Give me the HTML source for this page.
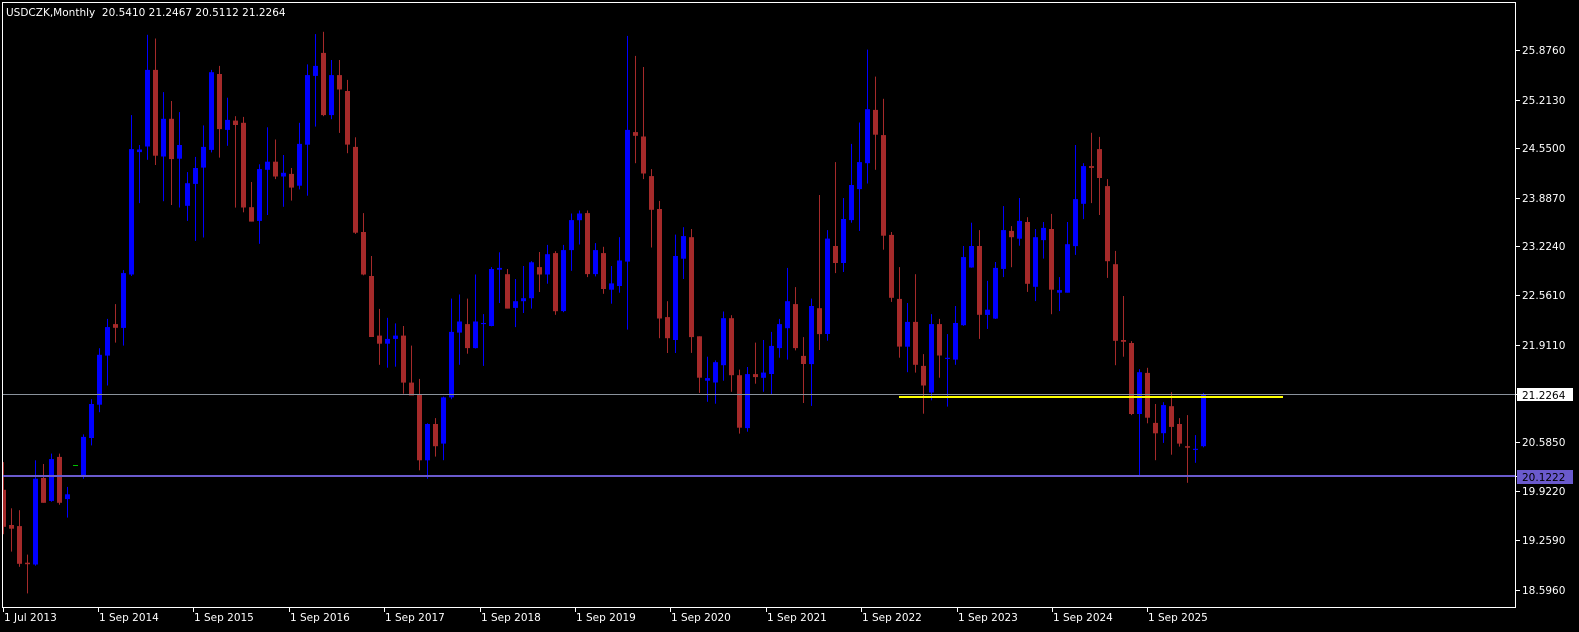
<!DOCTYPE html>
<html><head><meta charset="utf-8">
<style>
html,body{margin:0;padding:0;background:#000;}
body{width:1579px;height:632px;overflow:hidden;position:relative;font-family:"DejaVu Sans",sans-serif;}
svg{position:absolute;left:0;top:0;}
text{white-space:pre;}
</style></head>
<body>
<svg id="c" width="1579" height="632" xmlns="http://www.w3.org/2000/svg">
<rect x="0" y="0" width="1579" height="632" fill="#000"/>
<rect x="2.5" y="2.5" width="1513" height="605" fill="none" stroke="#fff" stroke-width="1"/>
<g id="cs"></g>
<line x1="3" y1="394.5" x2="1515" y2="394.5" stroke="#8a929c" stroke-width="1"/>
<rect x="3" y="475" width="1512" height="2" fill="#6a5acd"/>
<rect x="899" y="396" width="384" height="2" fill="#ffff00"/>
<g font-family="DejaVu Sans, sans-serif" font-size="10.5" fill="#fff">
<text x="6" y="16" xml:space="preserve">USDCZK,Monthly  20.5410 21.2467 20.5112 21.2264</text>
</g>
<g id="ax" font-family="DejaVu Sans, sans-serif" font-size="10.5" fill="#fff"></g>
<rect x="1517" y="388" width="56" height="13" fill="#fff"/>
<text x="1522" y="399" font-family="DejaVu Sans, sans-serif" font-size="10.5" fill="#000">21.2264</text>
<rect x="1517" y="470" width="56" height="14" fill="#6a5acd"/>
<text x="1522" y="481" font-family="DejaVu Sans, sans-serif" font-size="10.5" fill="#000">20.1222</text>
</svg>
<script>
var D=[
['r',1195,1390,1270,1370],['r',1320,1437,1365,1375],['r',1325,1478,1368,1470],['r',1445,1550,1467,1471],
['b',1190,1475,1240,1472],['r',1200,1305,1238,1305],['b',1172,1302,1187,1300],['r',1172,1310,1181,1305],
['b',1262,1345,1282,1295],['g',1204,1204,1203,1205],['b',1120,1240,1127,1230],['b',1025,1150,1038,1130],
['b',887,1060,905,1040],['b',808,988,830,907],['r',768,872,822,832],['b',676,880,684,832],
['b',257,692,349,688],['b',338,495,350,357],['b',40,378,135,342],['r',50,392,135,367],
['b',195,490,267,369],['r',219,500,267,376],['b',249,507,338,375],['b',411,543,441,502],
['b',370,597,400,443],['b',285,588,343,399],['b',135,358,141,351],['r',124,372,146,295],
['b',210,340,270,297],['r',260,507,272,284],['r',262,520,278,507],['r',438,545,506,545],
['b',390,605,403,543],['b',290,527,383,405],['r',323,430,383,423],['b',365,505,413,423],
['r',400,488,416,453],['b',278,458,335,448],['b',120,475,149,337],['b',38,288,124,151],
['r',32,260,89,257],['b',108,268,149,257],['r',108,305,149,188],['r',162,360,192,337],
['r',317,578,343,575],['r',522,690,573,688],['r',638,857,692,857],['r',781,932,853,875],
['b',805,940,862,875],['b',820,937,853,862],['r',827,1010,853,980],['r',880,1015,980,1015],
['r',970,1217,1013,1190],['b',1090,1240,1092,1190],['r',1076,1180,1092,1152],['b',1018,1190,1020,1145],
['b',753,1025,843,1020],['b',742,932,815,845],['r',753,902,822,887],['b',688,888,815,887],
['b',795,935,819,822],['b',668,828,673,827],['b',628,765,670,675],['r',673,780,687,780],
['b',700,830,760,778],['b',665,792,752,760],['b',652,780,655,752],['r',627,735,668,688],
['b',608,713,633,688],['r',625,797,630,787],['b',608,790,622,787],['b',523,678,541,622],
['b',515,607,523,541],['r',515,695,522,687],['b',603,693,622,687],['r',613,740,630,727],
['b',665,767,712,729],['b',587,737,650,719],['b',43,837,297,653],['r',97,387,303,313],
['r',127,430,315,415],['r',403,615,422,513],['r',489,860,511,807],['r',760,900,803,860],
['b',580,900,638,865],['b',560,700,584,645],['r',565,900,587,857],['r',855,1008,855,967],
['b',910,1032,968,975],['b',920,1037,925,980],['b',788,975,806,933],['r',798,1005,806,960],
['r',945,1118,960,1102],['b',938,1113,957,1103],['r',872,983,957,965],['b',865,1005,953,967],
['b',843,1013,881,957],['b',808,913,822,887],['b',670,918,760,833],['r',722,893,768,887],
['r',857,1035,908,930],['b',753,1043,773,930],['r',473,892,779,849],['b',568,867,591,849],
['r',384,684,611,657],['b',481,681,538,657],['b',335,548,446,541],['b',277,570,384,457],
['b',80,442,241,387],['r',153,405,243,310],['r',213,621,311,583],['r',573,762,581,751],
['r',668,913,754,883],['b',765,952,816,883],['r',687,953,816,932],['r',903,1064,935,988],
['b',795,1028,822,1007],['r',808,967,822,907],['b',849,1045,913,916],['b',773,932,819,918],
['b',611,827,641,825],['b',548,670,611,669],['r',568,862,611,797],['b',705,835,783,797],
['b',654,808,670,807],['b',503,695,568,673],['r',557,668,570,587],['b',481,610,543,591],
['r',533,735,546,713],['b',565,760,587,721],['b',546,645,562,595],['r',524,795,565,729],
['b',695,787,730,737],['b',546,737,606,737],['b',338,635,484,611],['b',387,538,395,497],
['r',305,495,395,400],['r',316,527,349,427],['r',430,697,449,652],['r',624,933,660,867],
['r',746,910,865,870],['r',868,1068,873,1065],['b',944,1230,952,1065],['r',940,1090,954,1075],
['r',1038,1190,1089,1117],['b',1033,1143,1041,1117],['r',1006,1175,1044,1100],['r',1076,1153,1092,1145],
['r',1068,1251,1152,1156],['b',1122,1197,1159,1162],['b',1008,1155,1012,1152]
];
var S=2.703;function Y(v){return v/S+20;}
var h='';
for(var i=0;i<D.length;i++){
 var d=D[i],cx=Math.round(3.3+8*i);
 var col=d[0]=='r'?'#a52a2a':(d[0]=='b'?'#0000ff':'#00c000');
 if(d[0]=='g'){h+='<rect x="'+(cx-2)+'" y="'+Math.round(Y(d[1]))+'" width="5" height="1" fill="'+col+'"/>';continue;}
 var wt=Y(d[1]),wb=Y(d[2]),bt=Y(d[3]),bb=Y(d[4]);
 var x0=Math.max(cx,3),bx=Math.max(cx-2,3);
 h+='<rect x="'+x0+'" y="'+wt.toFixed(1)+'" width="1" height="'+(wb-wt).toFixed(1)+'" fill="'+col+'"/>';
 h+='<rect x="'+bx+'" y="'+bt.toFixed(1)+'" width="'+(cx+3-bx)+'" height="'+Math.max(1,bb-bt).toFixed(1)+'" fill="'+col+'"/>';
}
document.getElementById('cs').innerHTML=h;
var a='';
var P=[['25.8760',50],['25.2130',100],['24.5500',148],['23.8870',198],['23.2240',246],['22.5610',295],['21.9110',345],['20.5850',442],['19.9220',491],['19.2590',540],['18.5960',590]];
P.forEach(function(p){a+='<rect x="1516" y="'+p[1]+'" width="4" height="1" fill="#fff"/><text x="1522" y="'+(p[1]+4)+'">'+p[0]+'</text>';});
a+='<rect x="1516" y="394" width="4" height="1" fill="#fff"/><rect x="1516" y="476" width="4" height="1" fill="#fff"/>';
var L=[['1 Jul 2013',3],['1 Sep 2014',98],['1 Sep 2015',193],['1 Sep 2016',289],['1 Sep 2017',384],['1 Sep 2018',480],['1 Sep 2019',575],['1 Sep 2020',670],['1 Sep 2021',766],['1 Sep 2022',861],['1 Sep 2023',957],['1 Sep 2024',1052],['1 Sep 2025',1147]];
L.forEach(function(l){a+='<rect x="'+l[1]+'" y="608" width="1" height="4" fill="#fff"/><text x="'+(l[1]+1)+'" y="621">'+l[0]+'</text>';});
document.getElementById('ax').innerHTML=a;
</script>
</body></html>
